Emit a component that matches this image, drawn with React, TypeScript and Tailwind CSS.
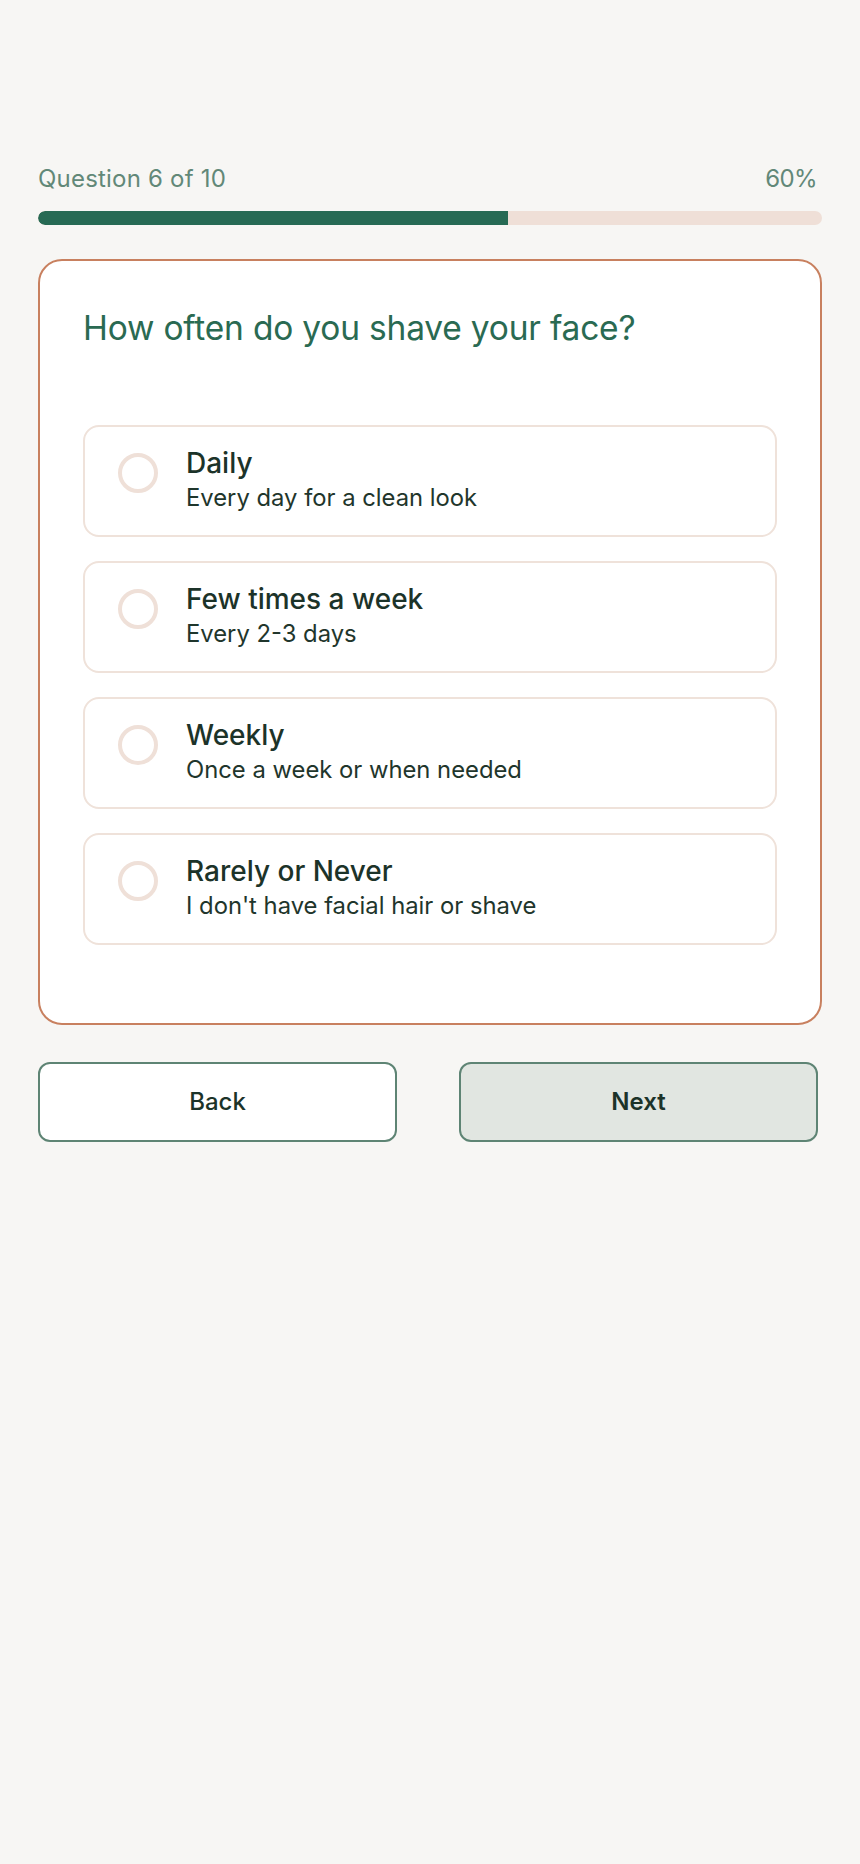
import { useState } from "react";

const options = [
  { id: "daily", title: "Daily", desc: "Every day for a clean look" },
  { id: "few", title: "Few times a week", desc: "Every 2-3 days" },
  { id: "weekly", title: "Weekly", desc: "Once a week or when needed" },
  { id: "rarely", title: "Rarely or Never", desc: "I don't have facial hair or shave" },
];

export default function App() {
  const [selected, setSelected] = useState<string | null>(null);
  const current = 6;
  const total = 10;
  const pct = Math.round((current / total) * 100);

  return (
    <div className="min-h-[1864px] bg-[#f7f6f4] px-[38px] pt-[163px] font-['Inter',sans-serif]">
      {/* progress */}
      <div className="flex items-center justify-between pr-[5px] text-[24px] leading-[32px] font-normal text-[#628878]">
        <span className="tracking-[0.2px]">
          Question {current} of {total}
        </span>
        <span className="tracking-[-0.6px]">{pct}%</span>
      </div>
      <div className="mt-4 h-[14px] w-full overflow-hidden rounded-full bg-[#efdfd7]">
        <div className="h-full rounded-l-full bg-[#276a54]" style={{ width: `${pct}%` }} />
      </div>

      {/* question card */}
      <div className="mt-[34px] rounded-[24px] border-2 border-[#c8805f] bg-white px-[43px] pt-[45px] pb-[78px]">
        <h1 className="mb-[75px] text-[33.5px] leading-[44px] font-normal tracking-[-0.2px] text-[#2a6a52]">
          How often do you shave your face?
        </h1>

        <div className="flex flex-col gap-6">
          {options.map((o) => (
            <button
              key={o.id}
              onClick={() => setSelected(o.id)}
              className="flex h-[112px] items-start gap-7 rounded-2xl border-2 border-[#efe2da] bg-white pt-[18px] pb-[20px] pl-[33px] text-left"
            >
              <span
                className={
                  selected === o.id
                    ? "mt-2 h-10 w-10 shrink-0 rounded-full border-4 border-[#276a54]"
                    : "mt-2 h-10 w-10 shrink-0 rounded-full border-4 border-[#efe0d8]"
                }
              />
              <span className="flex flex-col">
                <span className="text-[28px] leading-[36px] font-medium text-[#1c3329]">{o.title}</span>
                <span className="text-[23.8px] leading-[34px] text-[#1f362c]">{o.desc}</span>
              </span>
            </button>
          ))}
        </div>
      </div>

      {/* nav */}
      <div className="mt-[37px] flex gap-[62px]">
        <button className="h-[80px] w-[359px] rounded-xl border-2 border-[#5e8474] bg-white text-[24px] font-medium text-[#1c3329]">
          Back
        </button>
        <button className="h-[80px] w-[359px] rounded-xl border-2 border-[#5e8474] bg-[#e1e6e1] text-[24px] font-semibold text-[#1c3329]">
          Next
        </button>
      </div>
    </div>
  );
}
